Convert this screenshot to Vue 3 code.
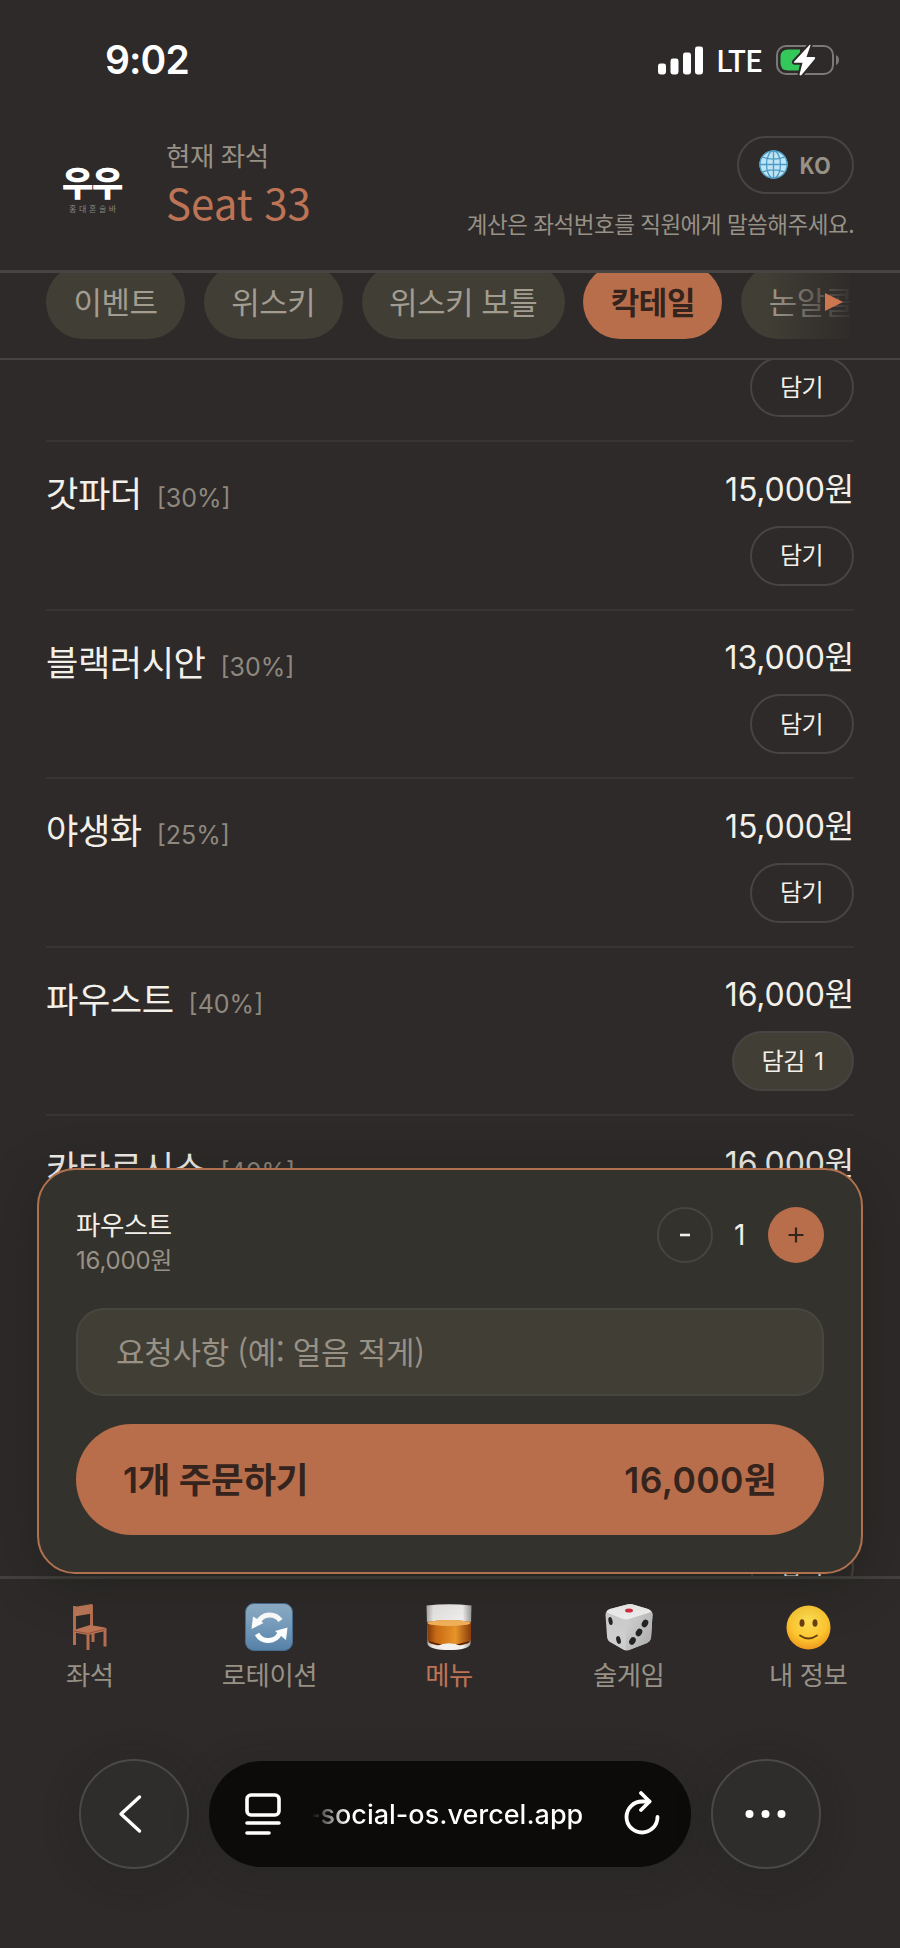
<script setup>
const tabs = [
  { label: '이벤트', size: 'short' },
  { label: '위스키', size: 'short' },
  { label: '위스키 보틀', size: 'long' },
  { label: '칵테일', size: 'short', active: true },
  { label: '논알콜', size: 'short' },
]

const drinks = [
  { name: '', abv: '', price: '', count: 0 },
  { name: '갓파더', abv: '[30%]', price: '15,000원', count: 0 },
  { name: '블랙러시안', abv: '[30%]', price: '13,000원', count: 0 },
  { name: '야생화', abv: '[25%]', price: '15,000원', count: 0 },
  { name: '파우스트', abv: '[40%]', price: '16,000원', count: 1 },
  { name: '카타르시스', abv: '[40%]', price: '16,000원', count: 0 },
  { name: '', abv: '', price: '', count: 0 },
  { name: '', abv: '', price: '', count: 0 },
]
</script>

<template>
  <div class="screen" lang="ko">
    <div class="status">
      <span class="clock">9:02</span>
      <div class="status-right">
        <svg class="signal" width="46" height="29" viewBox="0 0 46 29" fill="#fff">
          <rect x="0" y="17.500" width="8" height="11" rx="2.400" />
          <rect x="12.500" y="12.500" width="8" height="16" rx="2.400" />
          <rect x="25" y="6.500" width="8" height="22" rx="2.400" />
          <rect x="37" y="0.500" width="8" height="28" rx="2.400" />
        </svg>
        <span class="lte">LTE</span>
        <svg class="battery" width="64" height="34" viewBox="0 0 64 34">
          <rect x="1" y="3" width="56" height="28" rx="9" fill="none" stroke="#7b7978" stroke-width="2" />
          <path d="M12 6.500H24V27.500H12Q4.500 27.500 4.500 20V14Q4.500 6.500 12 6.500Z" fill="#34c759" />
          <path d="M60 12Q63 13.500 63 17T60 22Z" fill="#7b7978" />
          <path d="M34 1.500L18 18.700Q17.500 19.800 18.500 19.800H26.500L23.500 31.500Q24 33 25.500 32L39 15.800Q39.800 14 38 14H30.500L34.500 2.500Z" fill="#fff" stroke="#2d2a29" stroke-width="4" paint-order="stroke" />
        </svg>
      </div>
    </div>

    <header class="head">
      <div class="logo">
        <span class="logo-main">우우</span>
        <span class="logo-sub">홍대혼술바</span>
      </div>
      <div class="seat">
        <span class="seat-label">현재 좌석</span>
        <span class="seat-number">Seat 33</span>
      </div>
      <div class="head-right">
        <div class="lang">
          <svg width="29" height="29" viewBox="0 0 29 29">
            <circle cx="14.500" cy="14.500" r="14" fill="#bfe4f5" />
            <g fill="none" stroke="#4b9cc4" stroke-width="1.300">
              <circle cx="14.500" cy="14.500" r="13.600" />
              <ellipse cx="14.500" cy="14.500" rx="7" ry="13.600" />
              <path d="M14.500 1V28M1 14.500H28M3.500 7.200Q14.500 11 25.500 7.200M3.500 21.800Q14.500 18 25.500 21.800" />
            </g>
          </svg>
          <span>KO</span>
        </div>
        <span class="notice">계산은 좌석번호를 직원에게 말씀해주세요.</span>
      </div>
    </header>

    <nav class="tabs">
      <div class="tab-track">
        <span v-for="t in tabs" :key="t.label" class="tab" :class="[t.size, { active: t.active }]">{{ t.label }}</span>
        <div class="tab-fade">
          <svg width="18" height="18" viewBox="0 0 18 18"><path d="M0 0L18 9L0 18Z" fill="#cc7750" /></svg>
        </div>
      </div>
    </nav>

    <main class="list">
      <div v-for="(d, i) in drinks" :key="i" class="row">
        <div class="row-name">
          <span class="name">{{ d.name }}</span>
          <span class="abv">{{ d.abv }}</span>
        </div>
        <div class="row-side">
          <span class="price">{{ d.price }}</span>
          <button class="add" :class="{ added: d.count }">{{ d.count ? '담김 ' + d.count : '담기' }}</button>
        </div>
      </div>
    </main>

    <section class="cart">
      <div class="cart-top">
        <div class="cart-item">
          <span class="cart-name">파우스트</span>
          <span class="cart-price">16,000원</span>
        </div>
        <div class="stepper">
          <button class="step">
            <svg width="10" height="4" viewBox="0 0 10 4"><path d="M0 2H10" stroke="#f3f0ea" stroke-width="2.600" /></svg>
          </button>
          <span class="qty">1</span>
          <button class="step plus">
            <svg width="16" height="16" viewBox="0 0 16 16"><path d="M0.500 8H15.500M8 0.500V15.500" stroke="#33241e" stroke-width="2.200" /></svg>
          </button>
        </div>
      </div>
      <div class="request">요청사항 (예: 얼음 적게)</div>
      <button class="order"><span>1개 주문하기</span><span class="total">16,000원</span></button>
    </section>

    <nav class="bottom">
      <div class="item">
        <svg viewBox="0 0 48 48">
          <g fill="none" stroke="#b56e50" stroke-width="3">
            <path d="M8.500 3V42M25.500 1.500V24M22 24V47M39 25V43.500M27 28V39" />
          </g>
          <path d="M8 4L26 1V10.500L8 13.500Z" fill="#bd7758" />
          <path d="M8 27L24 22L39 24.500V28L22 32L8 29.500Z" fill="#bd7556" />
          <path d="M8 28L22 30.500L39 26" fill="none" stroke="#90523c" stroke-width="1" />
        </svg>
        <span>좌석</span>
      </div>
      <div class="item">
        <svg viewBox="0 0 48 48">
          <defs>
            <linearGradient id="sync" x1="0" y1="0" x2="0" y2="1">
              <stop offset="0" stop-color="#94b5cf" /><stop offset="1" stop-color="#5580a6" />
            </linearGradient>
          </defs>
          <rect x="0.500" y="0.500" width="47" height="47" rx="8.500" fill="url(#sync)" stroke="#496e90" />
          <path d="M13 19.500A13 13 0 0 1 35.500 17.500M35 30A13 13 0 0 1 12 31" fill="none" stroke="#fff" stroke-width="5" />
          <path d="M8 13.500L6.500 26L18.500 20ZM42.500 24.500L30 28L41 37Z" fill="#fff" />
        </svg>
        <span>로테이션</span>
      </div>
      <div class="item current">
        <svg viewBox="0 0 48 48">
          <defs>
            <linearGradient id="glass" x1="0" x2="1">
              <stop offset="0" stop-color="#aaa9a8" /><stop offset=".15" stop-color="#e9e8e7" /><stop offset=".8" stop-color="#f4f3f2" /><stop offset="1" stop-color="#9d9c9b" />
            </linearGradient>
            <linearGradient id="whisky" x1="0" x2="1">
              <stop offset="0" stop-color="#7d370c" /><stop offset=".2" stop-color="#c86a14" /><stop offset=".65" stop-color="#e8952a" /><stop offset="1" stop-color="#8a3d0c" />
            </linearGradient>
          </defs>
          <path d="M1.500 2.500Q24 0 46.500 2.500L45.500 41Q43 47 24 47T2.500 41Z" fill="url(#glass)" />
          <path d="M2 19Q24 15 46 19V37Q44 43 24 43T2.500 37Z" fill="url(#whisky)" />
          <ellipse cx="24" cy="20" rx="21.500" ry="3" fill="#f3b25a" />
          <path d="M4 39Q14 42.500 24 42.500T44 39" fill="none" stroke="#5a260b" stroke-width="1.600" />
          <path d="M11 43.500Q24 37 37 43.500Q24 49 11 43.500Z" fill="#f3f0ed" />
        </svg>
        <span>메뉴</span>
      </div>
      <div class="item">
        <svg viewBox="0 0 48 48">
          <defs>
            <linearGradient id="dieR" x1="0" y1="0" x2="1" y2="1">
              <stop offset="0" stop-color="#d8d8d8" /><stop offset="1" stop-color="#a9a9aa" />
            </linearGradient>
          </defs>
          <path d="M22 1.500Q25 .5 28 1.500L43 6Q48 8 47.500 12L46 35Q45.500 38 42 40L24 47Q21 48 18 46.500L5 39Q2 37 2 33L.5 12Q.5 7.500 5 6Z" fill="#cfcfcf" />
          <path d="M22 1.500Q25 .5 28 1.500L43 6Q48 8 44 10L24 16Q20 17 17 15.500L3 10Q0 8 5 6Z" fill="#f2f2f2" />
          <path d="M21 17L45 9.500Q47.700 9 47.500 12L46 35Q45.500 38 42 40L24 47Q21 48 20.500 45Z" fill="url(#dieR)" />
          <ellipse cx="24" cy="7.500" rx="4" ry="2" fill="#d62f45" />
          <g fill="#242424">
            <ellipse cx="5.500" cy="18" rx="2" ry="4" transform="rotate(-12 5.500 18)" />
            <ellipse cx="13.500" cy="37" rx="2.200" ry="4" transform="rotate(-15 13.500 37)" />
            <ellipse cx="40" cy="20.500" rx="3" ry="4" transform="rotate(30 40 20.500)" />
            <ellipse cx="34" cy="29.500" rx="3" ry="4" transform="rotate(30 34 29.500)" />
            <ellipse cx="27.500" cy="38" rx="3" ry="4" transform="rotate(30 27.500 38)" />
          </g>
        </svg>
        <span>술게임</span>
      </div>
      <div class="item">
        <svg viewBox="0 0 48 48">
          <defs>
            <radialGradient id="face" cx=".5" cy=".35" r=".65">
              <stop offset="0" stop-color="#ffe158" /><stop offset=".65" stop-color="#fdc62f" /><stop offset="1" stop-color="#ee981e" />
            </radialGradient>
          </defs>
          <circle cx="24.500" cy="24.500" r="22" fill="url(#face)" />
          <ellipse cx="18" cy="20" rx="2.500" ry="3.800" fill="#6b4013" />
          <ellipse cx="31" cy="20" rx="2.500" ry="3.800" fill="#6b4013" />
          <path d="M16 32.500Q24.500 38.500 33 32.500" fill="none" stroke="#6b4013" stroke-width="1.800" stroke-linecap="round" />
        </svg>
        <span>내 정보</span>
      </div>
    </nav>

    <footer class="browser">
      <div class="round">
        <svg width="110" height="110" viewBox="0 0 110 110"><path d="M60.500 38L42 55L60.500 72" fill="none" stroke="#fff" stroke-width="3.400" stroke-linecap="round" stroke-linejoin="round" /></svg>
      </div>
      <div class="address">
        <svg width="36" height="42" viewBox="0 0 36 42" fill="none" stroke="#fff" stroke-width="3.600" stroke-linecap="round">
          <rect x="2" y="2" width="32" height="20" rx="4" />
          <path d="M2 30H34M2 40H24" />
        </svg>
        <span class="url">-social-os.vercel.app</span>
        <svg class="reload" width="36" height="44" viewBox="0 0 36 44" fill="none" stroke="#fff" stroke-width="3.800" stroke-linecap="round" stroke-linejoin="round">
          <path d="M25.500 10.500H18A15.500 15.500 0 1 0 33.500 26" />
          <path d="M17 2L25.500 10.500L17 19" />
        </svg>
      </div>
      <div class="round">
        <svg width="110" height="110" viewBox="0 0 110 110" fill="#fff"><circle cx="38.500" cy="55" r="4" /><circle cx="54.500" cy="55" r="4" /><circle cx="70.500" cy="55" r="4" /></svg>
      </div>
    </footer>
  </div>
</template>

<style>
body {
  margin: 0;
  background: #2d2a29;
}
</style>

<style scoped>
.screen {
  position: relative;
  box-sizing: border-box;
  width: 900px;
  height: 1948px;
  overflow: hidden;
  display: flex;
  flex-direction: column;
  background: #2d2a29;
  color: #f3f0ea;
  font-family: "Noto Sans CJK KR", sans-serif;
  font-weight: 400;
  letter-spacing: -0.48px;
}
.screen * {
  box-sizing: border-box;
}
.screen span {
  white-space: nowrap;
}
button {
  padding: 0;
  margin: 0;
  font: inherit;
  letter-spacing: inherit;
  color: inherit;
  background: none;
  border: 0;
}

.status {
  flex: none;
  height: 120px;
  padding: 0 60px 0 105px;
  display: flex;
  justify-content: space-between;
  align-items: center;
  color: #fff;
}
.clock {
  font: 600 39px/40px Inter, sans-serif;
  letter-spacing: -0.9px;
}
.status-right {
  display: flex;
  align-items: center;
}
.lte {
  width: 47px;
  margin: -2px 13px 0 12px;
  font: 500 30px/40px "Noto Sans CJK KR", sans-serif;
  letter-spacing: -1px;
}

.head {
  flex: none;
  height: 153px;
  display: flex;
  padding: 0 46px 0 62px;
  border-bottom: 3px solid #474541;
}
.logo {
  width: 104px;
  padding-top: 44px;
  display: flex;
  flex-direction: column;
}
.logo-main {
  font-size: 34px;
  font-weight: 900;
  line-height: 36px;
  letter-spacing: -1.2px;
  color: #fff;
}
.logo-sub {
  padding-left: 7px;
  font-size: 8px;
  line-height: 10px;
  margin-top: 4px;
  letter-spacing: 2.600px;
  color: #8a8682;
}
.seat {
  display: flex;
  flex-direction: column;
  padding-top: 17px;
}
.seat-label {
  font-size: 26.500px;
  line-height: 36px;
  color: #989186;
}
.seat-number {
  font-size: 42px;
  line-height: 57px;
  letter-spacing: 0;
  color: #bd7355;
}
.head-right {
  margin-left: auto;
  padding-top: 16px;
  display: flex;
  flex-direction: column;
  align-items: flex-end;
}
.lang {
  width: 117px;
  height: 58px;
  display: flex;
  align-items: center;
  padding: 0 0 2px 20px;
  gap: 11px;
  border: 2px solid #474543;
  border-radius: 29px;
  font-size: 22px;
  font-weight: 700;
  letter-spacing: 0.5px;
  color: #989186;
}
.notice {
  margin-top: 12px;
  font-size: 22.500px;
  line-height: 34px;
  color: #989186;
}

.tabs {
  flex: none;
  height: 87px;
  padding: 0 50px 0 46px;
  overflow: hidden;
  border-bottom: 2px solid #474543;
}
.tab-track {
  position: relative;
  display: flex;
  gap: 18.800px;
  height: 85px;
  overflow: hidden;
}
.tab {
  flex: none;
  height: 74px;
  margin-top: -8px;
  border-radius: 37px;
  background: #413e35;
  color: #a39c90;
  font-size: 31px;
  line-height: 72px;
  text-align: center;
}
.tab.short {
  width: 139px;
}
.tab.long {
  width: 203px;
}
.tab.active {
  background: #b86e4b;
  color: #35241d;
  font-weight: 700;
}
.tab-fade {
  position: absolute;
  top: 0;
  right: 0;
  width: 84px;
  height: 85px;
  padding: 20px 7px 0 0;
  text-align: right;
  line-height: 0;
  background: linear-gradient(to right, rgba(45, 42, 41, 0), rgba(45, 42, 41, 0.92));
}

.list {
  flex: none;
  height: 1216px;
  overflow: hidden;
  padding: 0 46px;
}
.row {
  height: 168.500px;
  display: flex;
  justify-content: space-between;
  border-bottom: 2px solid #373534;
}
.row:first-child {
  margin-top: -86.500px;
}
.row-name {
  display: flex;
  align-items: baseline;
  gap: 15px;
  height: 52px;
  margin-top: 24px;
}
.name {
  font-size: 35.200px;
  line-height: 52px;
}
.abv {
  font: 400 25px/40px Inter, sans-serif;
  letter-spacing: 0;
  color: #8f887e;
}
.row-side {
  display: flex;
  flex-direction: column;
  align-items: flex-end;
  padding-top: 27.500px;
}
.price {
  height: 40px;
  font: 400 32px/40px Inter, "Noto Sans CJK KR", sans-serif;
  letter-spacing: -0.15px;
}
.add {
  width: 104px;
  height: 60px;
  margin-top: 16px;
  padding-right: 1px;
  border: 2px solid #474543;
  border-radius: 30px;
  font: 400 24px/53px Inter, "Noto Sans CJK KR", sans-serif;
  letter-spacing: -0.7px;
}
.add.added {
  width: 122px;
  background: #413e35;
  letter-spacing: -0.4px;
  word-spacing: 3px;
}

.cart {
  position: absolute;
  left: 37px;
  top: 1168px;
  width: 826px;
  height: 406px;
  padding: 37px;
  border: 2px solid #b0714f;
  border-radius: 38px;
  background: #34322d;
  box-shadow: 0 10px 50px rgba(20, 22, 18, 0.35);
}
.cart-top {
  display: flex;
  justify-content: space-between;
  height: 101px;
}
.cart-item {
  display: flex;
  flex-direction: column;
}
.cart-name {
  margin-top: -2px;
  font-size: 26.500px;
  line-height: 37px;
}
.cart-price {
  font: 400 24px/38px Inter, "Noto Sans CJK KR", sans-serif;
  letter-spacing: -0.2px;
  color: #989186;
}
.stepper {
  display: flex;
  align-items: center;
  height: 56px;
}
.step {
  width: 56px;
  height: 56px;
  display: flex;
  align-items: center;
  justify-content: center;
  border: 2px solid #474540;
  border-radius: 50%;
}
.step.plus {
  border: 0;
  background: #b86e4b;
}
.qty {
  width: 55px;
  padding-right: 2px;
  text-align: center;
  font: 400 28px/40px Inter, sans-serif;
}
.request {
  height: 88px;
  padding-left: 38px;
  border: 2px solid #474640;
  border-radius: 28px;
  background: #413e35;
  color: #989186;
  font-size: 31px;
  line-height: 82px;
  letter-spacing: -0.25px;
}
.order {
  width: 100%;
  height: 111px;
  margin-top: 28px;
  padding: 2px 47px 0;
  display: flex;
  justify-content: space-between;
  align-items: center;
  border-radius: 56px;
  background: #b86e4b;
  color: #35241d;
  font: 600 35.500px/50px Inter, "Noto Sans CJK KR", sans-serif;
  letter-spacing: -0.3px;
}
.total {
  letter-spacing: 0.4px;
}

.bottom {
  flex: none;
  height: 124px;
  display: flex;
  padding-right: 2px;
  border-top: 3px solid #42413f;
}
.item {
  flex: 1;
  display: flex;
  flex-direction: column;
  align-items: center;
  padding-top: 24px;
  font-size: 26.400px;
  line-height: 36px;
  color: #989186;
}
.item svg {
  width: 48px;
  height: 48px;
  margin-bottom: 5px;
}
.item.current {
  color: #bd7355;
}

.browser {
  flex: 1;
  display: flex;
  align-items: flex-start;
  gap: 20px;
  padding: 59px 79px 0;
}
.round {
  flex: none;
  width: 110px;
  height: 110px;
  border-radius: 50%;
  border: 2px solid #4b4947;
  background: #2f2d2c;
  box-shadow: 0 6px 36px rgba(30, 34, 30, 0.3);
}
.round svg {
  display: block;
  margin: -2px;
}
.address {
  flex: 1;
  height: 106px;
  margin-top: 2px;
  padding: 0 31px 0 36px;
  display: flex;
  align-items: center;
  border-radius: 53px;
  background: #0c0b0a;
  box-shadow: 0 6px 36px rgba(30, 34, 30, 0.3);
}
.url {
  margin-left: 27px;
  padding-top: 1px;
  font: 500 27px/40px Inter, sans-serif;
  letter-spacing: 0;
  background: linear-gradient(to right, rgba(255, 255, 255, 0) 4px, rgba(255, 255, 255, 0.3) 14px, #fff 40px);
  -webkit-background-clip: text;
  background-clip: text;
  color: transparent;
}
.reload {
  margin: -3px 0 0 auto;
}
</style>
